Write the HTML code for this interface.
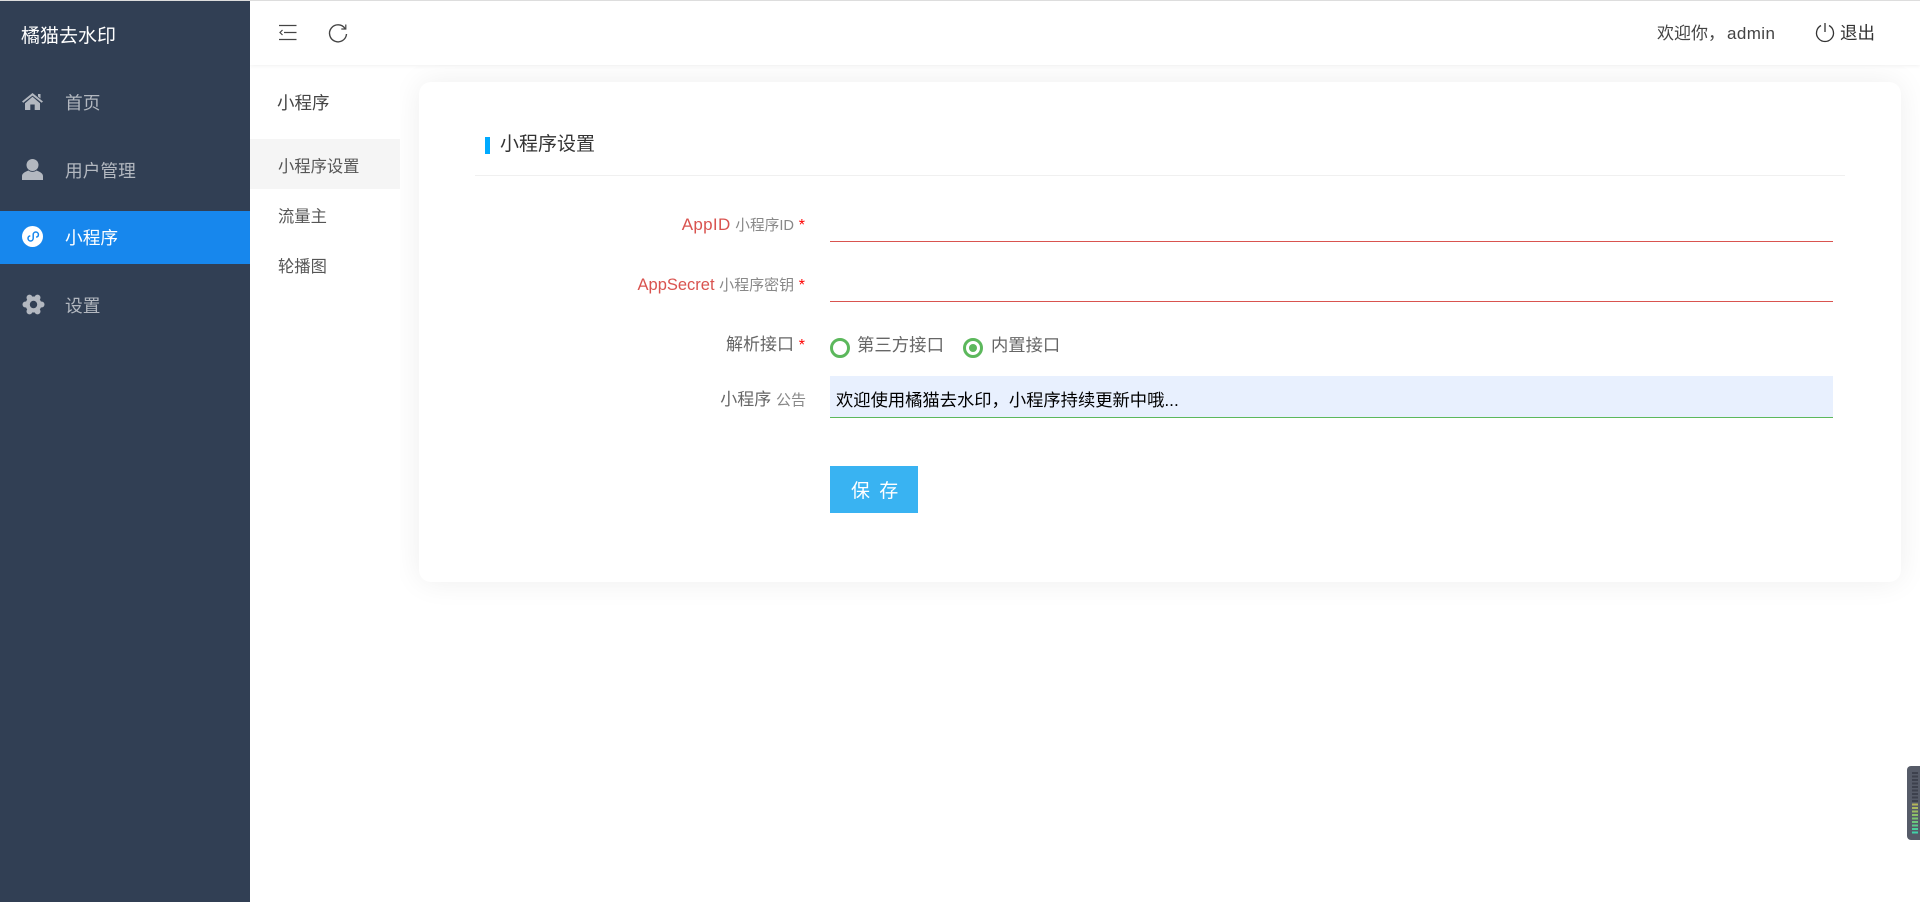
<!DOCTYPE html>
<html lang="zh-CN">
<head>
<meta charset="utf-8">
<title>橘猫去水印</title>
<style>
html,body{margin:0;padding:0;width:1920px;height:902px;overflow:hidden;background:#fff}
body{position:relative;font-family:"Liberation Sans","Noto Sans CJK SC",sans-serif;color:#333}
.a{position:absolute}
.t{position:absolute;white-space:nowrap;line-height:30px;height:30px}
svg{position:absolute;display:block;overflow:visible}
.r{text-align:right}
small{font-size:15px;color:#888}
i{font-style:normal;color:#f00}
</style>
</head>
<body>
<div class="a" style="left:419px;top:82px;width:1482px;height:500px;background:#fff;border-radius:12px;box-shadow:0 0 30px rgba(0,0,0,.07)"></div>

<div class="a" style="left:250px;top:1px;width:150px;height:901px;background:#fff"></div>
<div class="a" style="left:250px;top:1px;width:1670px;height:64px;background:#fff;box-shadow:0 1px 4px rgba(0,0,0,.06)"></div>
<div class="a" style="left:0;top:0;width:1920px;height:1px;background:#ddd"></div>

<div class="a" style="left:0;top:1px;width:250px;height:901px;background:#313f54"></div>
<div class="t" style="left:21px;top:22px;font-size:19px;color:#fff">橘猫去水印</div>

<svg style="left:22px;top:93px" width="21" height="17" viewBox="0 0 21 17" fill="#b3b8c0"><path d="M10.5 0L21 8.5 19.7 9.8 10.5 2.6 1.3 9.8 0 8.5Z"/><path d="M16 1h2.5v4.5L16 3.5Z"/><path d="M3 10.2L10.5 3.800 18 10.2V17H12.700V11.500H8.300V17H3Z"/></svg>
<div class="t" style="left:65px;top:88px;font-size:17.700px;color:#b3b8c0">首页</div>

<svg style="left:22px;top:159px" width="21" height="21" viewBox="0 0 21 21" fill="#b3b8c0"><circle cx="10.5" cy="6" r="6"/><path d="M0 21v-4c0-3 4-4.5 6.5-5.5 2 1.8 6 1.800 8 0 2.500 1 6.500 2.500 6.500 5.500v4Z"/></svg>
<div class="t" style="left:65px;top:156px;font-size:17.700px;color:#b3b8c0">用户管理</div>

<div class="a" style="left:0;top:211px;width:250px;height:53px;background:#1787ed"></div>
<svg style="left:22px;top:226px" width="21" height="21" viewBox="0 0 21 21"><circle cx="10.500" cy="10.500" r="10.500" fill="#fff"/><path d="M8.300 9.800c-1.500.3-2.300 1.300-2.300 2.600 0 1.500 1.200 2.600 2.600 2.600s2.600-1.100 2.600-2.600V8.600c0-1.500 1.200-2.600 2.600-2.600s2.600 1.100 2.600 2.600c0 1.300-.8 2.300-2.300 2.600" fill="none" stroke="#1787ed" stroke-width="1.500"/></svg>
<div class="t" style="left:65px;top:223px;font-size:17.700px;color:#fff">小程序</div>

<svg style="left:22px;top:294px" width="23" height="21" viewBox="-11.500 -10.500 23 21" fill="#b3b8c0"><circle r="8"/><circle cx="8" cy="0" r="3"/><circle cx="-8" cy="0" r="3"/><circle cx="4" cy="6.900" r="3"/><circle cx="-4" cy="6.900" r="3"/><circle cx="4" cy="-6.900" r="3"/><circle cx="-4" cy="-6.900" r="3"/><circle r="3.700" fill="#313f54"/></svg>
<div class="t" style="left:65px;top:291px;font-size:17.700px;color:#b3b8c0">设置</div>

<svg style="left:279px;top:24px" width="18" height="17" viewBox="0 0 18 17" fill="none" stroke="#444" stroke-width="1.200"><path d="M0 1.500H17.500M5 8.500H17.500M0 15.500H17.500M3.500 6L1 8.500 3.500 11"/></svg>
<svg style="left:328px;top:23px" width="20" height="20" viewBox="0 0 20 20" fill="none" stroke="#444" stroke-width="1.400"><path d="M17 5.500A8.500 8.500 0 1 0 18.500 11"/><path d="M17.800 1.500V6H13.300" stroke-width="1.200"/></svg>

<div class="t" style="left:1657px;top:19px;font-size:17px;color:#444">欢迎你，<span style="letter-spacing:.4px;margin-left:2px">admin</span></div>
<svg style="left:1815px;top:22px" width="20" height="20" viewBox="0 0 20 20" fill="none" stroke="#333" stroke-width="1.300"><path d="M6 3.500A8.500 8.500 0 1 0 14 3.500M10 1V10"/></svg>
<div class="t" style="left:1840px;top:18px;font-size:17.500px;color:#333">退出</div>

<div class="t" style="left:277px;top:88px;font-size:17.500px;color:#444">小程序</div>
<div class="a" style="left:250px;top:139px;width:150px;height:50px;background:#f5f5f5"></div>
<div class="t" style="left:278px;top:152px;font-size:16.300px;color:#555">小程序设置</div>
<div class="t" style="left:278px;top:202px;font-size:16.300px;color:#555">流量主</div>
<div class="t" style="left:278px;top:252px;font-size:16.300px;color:#555">轮播图</div>

<div class="a" style="left:485px;top:137px;width:5px;height:17px;background:#00aaff"></div>
<div class="t" style="left:500px;top:130px;font-size:19px;color:#333">小程序设置</div>
<div class="a" style="left:475px;top:175px;width:1370px;height:1px;background:#f0f0f0"></div>

<div class="t r" style="right:1115px;top:210px;font-size:17px;color:#d9534f"><span style="letter-spacing:.3px">AppID</span> <small style="font-size:14.700px">小程序ID</small> <i style="font-size:16px">*</i></div>
<div class="a" style="left:830px;top:241px;width:1003px;height:1px;background:#d9534f"></div>
<div class="t r" style="right:1115px;top:270px;font-size:16.500px;color:#d9534f">AppSecret <small>小程序密钥</small> <i style="font-size:16px">*</i></div>
<div class="a" style="left:830px;top:301px;width:1003px;height:1px;background:#d9534f"></div>

<div class="t r" style="right:1115px;top:330px;font-size:17px;color:#666">解析接口 <i style="font-size:16px">*</i></div>
<div class="a" style="left:830px;top:338px;width:14px;height:14px;border:3px solid #5cb85c;border-radius:50%"></div>
<div class="t" style="left:857px;top:330px;font-size:17.400px;color:#666">第三方接口</div>
<div class="a" style="left:963px;top:338px;width:14px;height:14px;border:3px solid #5cb85c;border-radius:50%"></div>
<div class="a" style="left:969px;top:344px;width:8px;height:8px;background:#5cb85c;border-radius:50%"></div>
<div class="t" style="left:991px;top:330px;font-size:17.300px;color:#666">内置接口</div>

<div class="t r" style="right:1114px;top:385px;font-size:17px;color:#666">小程序 <small>公告</small></div>
<div class="a" style="left:830px;top:376px;width:1003px;height:41px;background:#e8f0fe;border-bottom:1px solid #5cb85c"></div>
<div class="t" style="left:836px;top:385px;font-size:17.300px;color:#000">欢迎使用橘猫去水印，小程序持续更新中哦...</div>

<div class="a" style="left:830px;top:466px;width:88px;height:47px;background:#39b3f2"></div>
<div class="t" style="left:851px;top:477px;font-size:19px;letter-spacing:2px;color:#fff">保 存</div>

<div class="a" style="left:1907px;top:766px;width:13px;height:74px;background:#565b68;border-radius:4px 0 0 4px"></div>
<svg style="left:1912px;top:772px" width="6" height="64" viewBox="0 0 6 64">
<g fill="#3d414d"><rect y="0" width="6" height="2"/><rect y="3.500" width="6" height="2"/><rect y="7" width="6" height="2"/><rect y="10.500" width="6" height="2"/><rect y="14" width="6" height="2"/><rect y="17.500" width="6" height="2"/><rect y="21" width="6" height="2"/><rect y="24.500" width="6" height="2"/><rect y="28" width="6" height="2"/></g>
<rect y="31.500" width="6" height="2" fill="#b5b55a"/><rect y="35" width="6" height="2" fill="#aab95e"/><rect y="38.500" width="6" height="2" fill="#9cbc62"/><rect y="42" width="6" height="2" fill="#8cc068"/><rect y="45.500" width="6" height="2" fill="#7cc470"/><rect y="49" width="6" height="2" fill="#6cc87c"/><rect y="52.500" width="6" height="2" fill="#5ccb8a"/><rect y="56" width="6" height="2" fill="#4ccf9a"/><rect y="59.500" width="6" height="2" fill="#40d2a8"/>
</svg>
</body>
</html>
